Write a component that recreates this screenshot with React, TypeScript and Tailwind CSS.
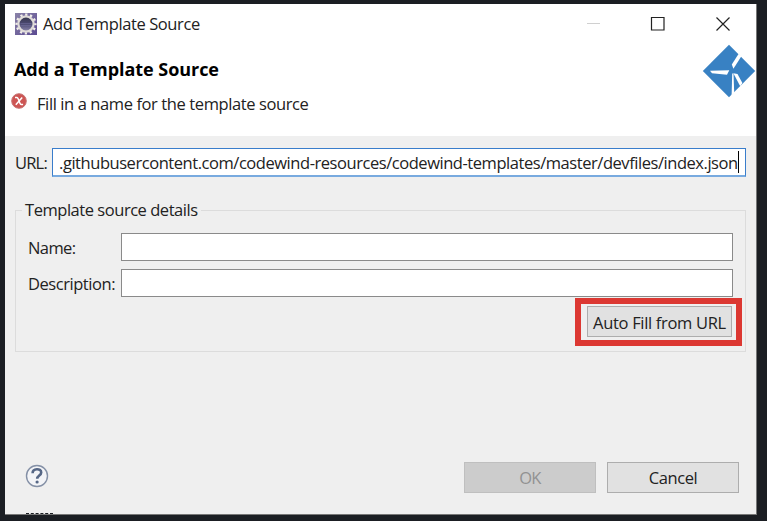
import React from "react";

function EclipseIcon() {
  return (
    <svg width="22" height="22" viewBox="0 0 22 22" className="shrink-0">
      <defs>
        <linearGradient id="tile" x1="0" y1="0" x2="1" y2="1">
          <stop offset="0" stopColor="#8a83a8" />
          <stop offset="1" stopColor="#5b4a91" />
        </linearGradient>
        <linearGradient id="moon" x1="0" y1="0" x2="0" y2="1">
          <stop offset="0" stopColor="#35354a" />
          <stop offset="0.5" stopColor="#4c4a72" />
          <stop offset="1" stopColor="#8d88ae" />
        </linearGradient>
      </defs>
      <rect width="22" height="22" fill="url(#tile)" />
      <circle cx="11" cy="11" r="9.4" fill="none" stroke="#f1eee9" strokeWidth="2.4" strokeDasharray="2.3 2.62" strokeDashoffset="1.15" />
      <circle cx="11" cy="11" r="7.6" fill="url(#moon)" stroke="#e0dcd9" strokeWidth="2.2" />
      <path d="M5.5 10.5h11M5.5 12.5h11" stroke="#7570a0" strokeWidth="0.5" />
    </svg>
  );
}

function ErrorIcon() {
  return (
    <svg width="16" height="16" viewBox="0 0 16 16" className="mb-[6px] shrink-0">
      <circle cx="8" cy="8" r="7.3" fill="#cd5553" stroke="#c77373" strokeWidth="1" />
      <path d="M4 4.6h1.9c2 0 2.3 6.8 4.3 6.8h1.9M11.2 4.4 4.8 11.8" fill="none" stroke="#fff" strokeWidth="1.5" />
    </svg>
  );
}

function CodewindLogo() {
  return (
    <svg width="54" height="54" viewBox="0 0 54 54" className="shrink-0">
      <path d="M27 .8 53.2 27 27 53.2.8 27Z" fill="#3881c3" />
      <path d="M8 26.8 27.3 26.3 25 30.8 10 29.2Z" fill="#fff" />
      <path d="M31.4 24.7 29.8 20.5 36.5 10 39.4 12.2Z" fill="#fff" />
      <path d="M31.4 29.2 35.5 30 40.4 39 38.2 42.2Z" fill="#fff" />
      <path d="M30.2 29.5h1.3l.7 19-2.6 3.2Z" fill="#fff" />
    </svg>
  );
}

function HelpIcon() {
  return (
    <svg width="24" height="24" viewBox="0 0 24 24" className="mb-[3px] shrink-0">
      <circle cx="12" cy="12" r="10.5" fill="#f3f4f7" stroke="#8490a6" strokeWidth="1.4" />
      <path d="M7.6 9.2C7.6 4 16.2 4 16.2 8.4c0 3.2-4 3-4 6.4" fill="none" stroke="#566786" strokeWidth="2.6" />
      <circle cx="12.1" cy="18" r="1.6" fill="#566786" />
    </svg>
  );
}

function Field({ label, tracking }: { label: string; tracking: string }) {
  return (
    <label className="flex h-7 items-center">
      <span className={"w-[93px] shrink-0 pt-px whitespace-nowrap " + tracking}>{label}</span>
      <input className="h-7 w-[612px] border border-[#8a8a8a] bg-white" />
    </label>
  );
}

export default function App() {
  return (
    <div className="h-[521px] w-[767px] overflow-hidden bg-[#1b1e23] pt-1 pl-[5px] font-['Open_Sans','Noto_Sans',sans-serif] text-[16.5px] leading-6 text-[#222]">
      <div className="flex h-[511px] w-[752px] flex-col border-r border-b border-[#777] bg-[#efefef]">
        <header className="h-[132px] shrink-0 bg-white">
          <div className="flex h-10 items-center pl-[10px]">
            <EclipseIcon />
            <h1 className="ml-[6px] tracking-[-0.4px]">Add Template Source</h1>
            <svg width="144" height="16" viewBox="0 0 144 16" fill="none" className="mr-[25px] ml-auto">
              <path d="M0 7.5h13" stroke="#d0d0d0" />
              <path d="M64.5 1.5h12.5v12.5H64.5Z" stroke="#222" strokeWidth="1.2" />
              <path d="m129.5 1.5 13 13M142.5 1.5l-13 13" stroke="#222" strokeWidth="1.2" />
            </svg>
          </div>
          <div className="flex justify-between pl-[9px]">
            <div className="pt-[13px]">
              <h2 className="text-lg leading-6 font-bold tracking-[-0.05px] text-black">Add a Template Source</h2>
              <p className="mt-[11px] -ml-[3px] flex items-center">
                <ErrorIcon />
                <span className="ml-[10px] tracking-[-0.4px]">Fill in a name for the template source</span>
              </p>
            </div>
            <CodewindLogo />
          </div>
        </header>
        <main className="flex grow flex-col px-[10px] pt-3">
          <div className="flex h-[29px] items-center">
            <span className="w-[37px] shrink-0 pt-px tracking-[-0.8px]">URL:</span>
            <div className="flex h-[29px] w-[694px] items-center border border-b-2 border-[#397dcb] border-b-[#78aadf] bg-white pl-[6px] whitespace-nowrap">
              <span className="pt-px tracking-[-0.45px]">.githubusercontent.com/codewind-resources/codewind-templates/master/devfiles/index.json</span>
              <span className="h-[22px] w-px shrink-0 bg-black" />
            </div>
          </div>
          <fieldset className="mt-[21px] h-[154px] w-[731px] border border-[#dcdcdc] pr-3 pl-3">
            <legend className="-ml-[6px] h-[25px] px-[3px] tracking-[-0.46px]">Template source details</legend>
            <div className="-mt-[2px] flex flex-col gap-2 pt-3">
              <Field label="Name:" tracking="tracking-[-0.6px]" />
              <Field label="Description:" tracking="tracking-[-0.45px]" />
            </div>
            <div className="mt-[9px] mr-px flex justify-end">
              <div className="relative">
                <button className="flex h-[31px] w-[145px] items-center justify-center border border-[#adadad] bg-[#e1e1e1] pt-[2px] whitespace-nowrap tracking-[-0.32px]">Auto Fill from URL</button>
                <div className="pointer-events-none absolute -top-2 -left-3 h-12 w-[167px] border-[6px] border-[#dc3832]" />
              </div>
            </div>
          </fieldset>
          <footer className="mt-auto mb-[21px] flex items-center pl-[10px]">
            <HelpIcon />
            <button className="mr-[11px] ml-auto h-[31px] w-[132px] border border-[#bfbfbf] bg-[#ccc] pt-px tracking-[-0.8px] text-[#929292]">OK</button>
            <button className="mr-[7px] h-[31px] w-[132px] border border-[#adadad] bg-[#e1e1e1] pt-px tracking-[-0.4px]">Cancel</button>
          </footer>
        </main>
      </div>
      <div className="-mt-[2px] ml-[21px] w-[27px] border-t border-dashed border-[#1b1e23]" />
    </div>
  );
}
